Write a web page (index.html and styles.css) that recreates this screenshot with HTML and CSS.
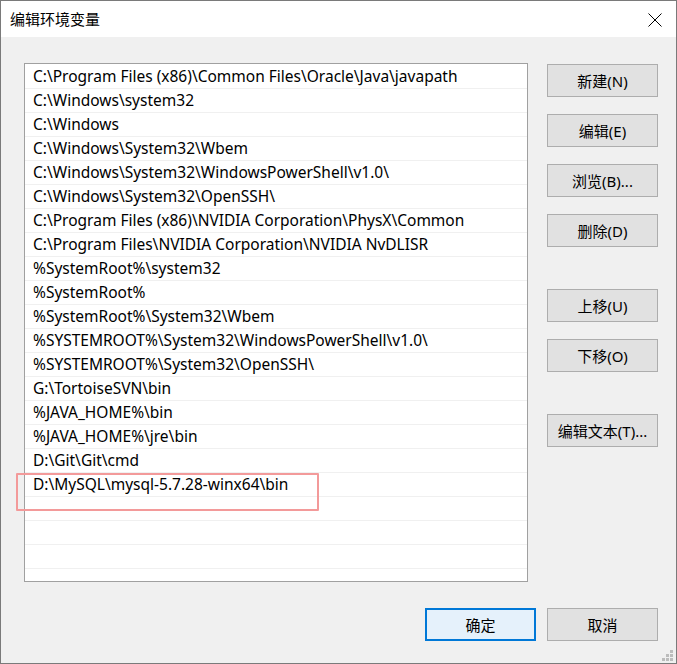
FILE: index.html
```html
<!DOCTYPE html>
<html lang="zh-CN">
<head>
<meta charset="utf-8">
<title>编辑环境变量</title>
<link rel="stylesheet" href="styles.css">
</head>
<body>
<div class="window">
  <div class="titlebar">
    <span class="title">编辑环境变量</span>
    <svg class="close" width="14" height="14" viewBox="0 0 14 14"><path d="M0.5 0.5 L13.5 13.5 M13.5 0.5 L0.5 13.5" stroke="#000" stroke-width="1" fill="none"/></svg>
  </div>
  <div class="content">
    <div class="main">
      <div class="list">
        <div class="row">C:\Program Files (x86)\Common Files\Oracle\Java\javapath</div>
        <div class="row">C:\Windows\system32</div>
        <div class="row">C:\Windows</div>
        <div class="row">C:\Windows\System32\Wbem</div>
        <div class="row">C:\Windows\System32\WindowsPowerShell\v1.0\</div>
        <div class="row">C:\Windows\System32\OpenSSH\</div>
        <div class="row">C:\Program Files (x86)\NVIDIA Corporation\PhysX\Common</div>
        <div class="row">C:\Program Files\NVIDIA Corporation\NVIDIA NvDLISR</div>
        <div class="row">%SystemRoot%\system32</div>
        <div class="row">%SystemRoot%</div>
        <div class="row">%SystemRoot%\System32\Wbem</div>
        <div class="row">%SYSTEMROOT%\System32\WindowsPowerShell\v1.0\</div>
        <div class="row">%SYSTEMROOT%\System32\OpenSSH\</div>
        <div class="row">G:\TortoiseSVN\bin</div>
        <div class="row">%JAVA_HOME%\bin</div>
        <div class="row">%JAVA_HOME%\jre\bin</div>
        <div class="row">D:\Git\Git\cmd</div>
        <div class="row">D:\MySQL\mysql-5.7.28-winx64\bin</div>
        <div class="row"></div>
        <div class="row"></div>
        <div class="row"></div>
        <div class="row"></div>
      </div>
      <div class="side">
        <button class="btn">新建(N)</button>
        <button class="btn">编辑(E)</button>
        <button class="btn">浏览(B)...</button>
        <button class="btn">删除(D)</button>
        <button class="btn group">上移(U)</button>
        <button class="btn">下移(O)</button>
        <button class="btn group">编辑文本(T)...</button>
      </div>
    </div>
    <div class="footer">
      <button class="btn primary">确定</button>
      <button class="btn">取消</button>
    </div>
    <div class="grip">
      <i class="d d3"></i>
      <i class="d d2"></i><i class="d d3"></i>
      <i class="d d1"></i><i class="d d2"></i><i class="d d3"></i>
    </div>
  </div>
  <div class="mark"></div>
</div>
</body>
</html>
```

FILE: styles.css
```css
html, body {
  margin: 0;
  padding: 0;
  background: #f0f0f0;
}
body {
  width: 677px;
  height: 664px;
  overflow: hidden;
  font-family: "Noto Sans", "Noto Sans CJK SC", sans-serif;
  font-size: 15px;
  color: #000;
}
.window {
  position: relative;
  box-sizing: border-box;
  width: 677px;
  height: 664px;
  border: 1px solid #7a7a7a;
  background: #f0f0f0;
  display: flex;
  flex-direction: column;
}
.titlebar {
  height: 36px;
  background: #fff;
  display: flex;
  align-items: center;
  justify-content: space-between;
  padding: 0 14px 0 9px;
  flex: none;
}
.title {
  font-size: 15px;
  line-height: 20px;
  margin-top: -1px;
}
.close {
  display: block;
  margin-top: 1px;
}
.content {
  position: relative;
  flex: 1;
  padding: 26px 18px 0 23px;
}
.main {
  display: flex;
  gap: 19px;
}
.list {
  box-sizing: border-box;
  width: 504px;
  height: 519px;
  background: #fff;
  border: 1px solid #a0a0a0;
  padding-top: 1px;
  overflow: hidden;
}
.row {
  box-sizing: border-box;
  height: 24px;
  line-height: 23px;
  border-bottom: 1px solid #f0f0f0;
  padding-left: 8px;
  white-space: nowrap;
  font-size: 15.5px;
}
.side {
  display: flex;
  flex-direction: column;
  gap: 17px;
  padding-top: 1px;
}
.btn {
  box-sizing: border-box;
  width: 111px;
  height: 33px;
  margin: 0;
  padding: 0;
  background: #e1e1e1;
  border: 1px solid #adadad;
  font-family: "Noto Sans", "Noto Sans CJK SC", sans-serif;
  font-size: 15px;
  color: #000;
}
.btn.group {
  margin-top: 25px;
}
.footer {
  display: flex;
  justify-content: flex-end;
  gap: 11px;
  margin-top: 26px;
}
.btn.primary {
  background: #e5f1fb;
  border: 2px solid #0078d7;
}
.grip {
  position: absolute;
  right: 2px;
  bottom: 1px;
  width: 12px;
  height: 12px;
  display: grid;
  grid-template-columns: repeat(3, 3px);
  grid-template-rows: repeat(3, 3px);
  gap: 1px;
}
.d {
  background: #bcbcbc;
}
.d1 { grid-column: 1; }
.d2 { grid-column: 2; }
.d3 { grid-column: 3; }
.mark {
  position: absolute;
  left: 15px;
  top: 472px;
  width: 303px;
  height: 38px;
  box-sizing: border-box;
  border: 2px solid #f39a9a;
  border-radius: 1px;
}
```
